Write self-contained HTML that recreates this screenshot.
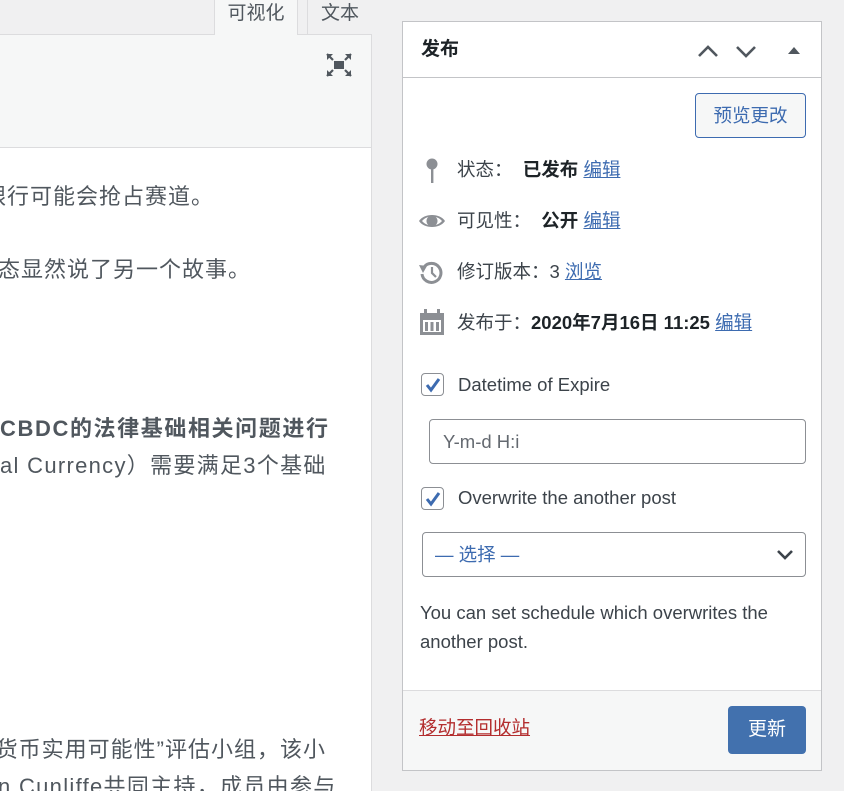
<!DOCTYPE html>
<html><head><meta charset="utf-8"><style>
*{margin:0;padding:0;box-sizing:border-box}
body{width:844px;height:791px;overflow:hidden;background:#f0f0f1;font-family:"Liberation Sans","Noto Sans CJK SC",sans-serif;color:#3c434a;position:relative}
.abs{position:absolute}
.ed{left:0;top:0;width:372px;height:791px;background:#fff;border-right:1px solid #dcdcde;overflow:hidden}
.txt{position:absolute;white-space:nowrap;font-size:22px;color:#50575e;line-height:30px;letter-spacing:1px}
a{color:#3d6bb0;text-decoration:underline}
.row{position:absolute;left:457px;font-size:18.5px;line-height:24px;white-space:nowrap;color:#3c434a}
.row b{color:#1d2327}
.cb{position:absolute;left:421px;width:23px;height:23px;border:1px solid #8c8f94;border-radius:4px;background:#fff}
</style></head><body>
<div class="abs ed">
<div class="txt" style="right:157px;top:182px">银行可能会抢占赛道。</div>
<div class="txt" style="right:120px;top:255px">状态显然说了另一个故事。</div>
<div class="txt" style="left:0;top:414px;font-weight:bold;letter-spacing:1.6px">CBDC的法律基础相关问题进行</div>
<div class="txt" style="left:0;top:451px;letter-spacing:1.3px">al Currency）需要满足3个基础</div>
<div class="txt" style="right:45px;top:735px">字货币实用可能性”评估小组，该小</div>
<div class="txt" style="left:-2px;top:772px;letter-spacing:1.3px">n Cunliffe共同主持，成员由参与</div>
</div>
<div class="abs" style="left:0;top:0;width:214px;height:35px;background:#f0f0f1;border-bottom:1px solid #dcdcde"></div>
<div class="abs" style="left:214px;top:0;width:84px;height:36px;background:#f6f7f7;border:1px solid #dcdcde;border-bottom:none;border-top:none;font-size:19px;text-align:center;line-height:28px;color:#50575e">可视化</div>
<div class="abs" style="left:298px;top:0;width:9px;height:35px;background:#f0f0f1;border-bottom:1px solid #dcdcde"></div>
<div class="abs" style="left:307px;top:0;width:65px;height:35px;background:#f0f0f1;border-left:1px solid #dcdcde;border-bottom:1px solid #dcdcde;font-size:19px;text-align:center;line-height:28px;color:#50575e">文本</div>
<div class="abs" style="left:0;top:35px;width:371px;height:113px;background:#f6f7f7;border-bottom:1px solid #dcdcde"></div>
<svg class="abs" style="left:326px;top:53px" width="26" height="24" viewBox="0 0 26 24"><rect x="8" y="8" width="10" height="8" fill="#50575e"/><path d="M1 1l6 6M25 1l-6 6M1 23l6-6M25 23l-6-6" stroke="#50575e" stroke-width="2.2"/><path d="M1 1h6L1 7zM25 1h-6l6 6zM1 23h6l-6-6zM25 23h-6l6-6z" fill="#50575e"/></svg>

<div class="abs" style="left:402px;top:21px;width:420px;height:750px;background:#fff;border:1px solid #c3c4c7"></div>
<div class="abs" style="left:403px;top:77px;width:418px;height:1px;background:#c3c4c7"></div>
<div class="abs" style="left:421px;top:37px;font-size:19px;font-weight:bold;color:#1d2327;line-height:26px">发布</div>
<svg class="abs" style="left:697px;top:41px" width="110" height="20" viewBox="0 0 110 20"><path d="M2 15l9-9 9 9" stroke="#50575e" stroke-width="2.6" fill="none"/><path d="M40 6l9 9 9-9" stroke="#50575e" stroke-width="2.6" fill="none"/><path d="M91 13l6-7 6 7z" fill="#50575e"/></svg>
<div class="abs" style="left:695px;top:93px;width:111px;height:45px;border:1px solid #3d6bb0;border-radius:4px;background:#f6f7f7;color:#3d6bb0;font-size:18.5px;text-align:center;line-height:43px">预览更改</div>

<svg class="abs" style="left:424px;top:158px" width="16" height="26" viewBox="0 0 16 26"><circle cx="8" cy="6" r="5.5" fill="#8c8f94"/><rect x="7" y="10" width="2.4" height="15" fill="#8c8f94"/></svg>
<div class="row" style="top:158px">状态：&nbsp;&nbsp;<b>已发布</b> <a>编辑</a></div>
<svg class="abs" style="left:418px;top:211px" width="28" height="20" viewBox="0 0 28 20"><path d="M1 10C6 2 22 2 27 10 22 18 6 18 1 10z" fill="#8c8f94"/><path d="M4 10C9 4 19 4 24 10 19 16 9 16 4 10z" fill="#fff"/><circle cx="14" cy="10" r="5.5" fill="#8c8f94"/></svg>
<div class="row" style="top:209px">可见性：&nbsp;&nbsp;<b>公开</b> <a>编辑</a></div>
<svg class="abs" style="left:418px;top:259px" width="26" height="26" viewBox="0 0 26 26"><path d="M6 8A9.5 9.5 0 1 1 4 15" stroke="#8c8f94" stroke-width="3" fill="none"/><path d="M1 6l8 1-4 7z" fill="#8c8f94"/><path d="M14 8v6l4 4" stroke="#8c8f94" stroke-width="2.2" fill="none"/></svg>
<div class="row" style="top:260px">修订版本：3 <a>浏览</a></div>
<svg class="abs" style="left:420px;top:309px" width="24" height="26" viewBox="0 0 24 26"><rect x="0" y="4" width="24" height="22" fill="#8c8f94"/><rect x="3" y="11" width="18" height="12" fill="#fff"/><rect x="5" y="13" width="3" height="9" fill="#8c8f94"/><rect x="10.5" y="13" width="3" height="9" fill="#8c8f94"/><rect x="16" y="13" width="3" height="9" fill="#8c8f94"/><rect x="4" y="0" width="3" height="7" fill="#8c8f94"/><rect x="17" y="0" width="3" height="7" fill="#8c8f94"/></svg>
<div class="row" style="top:311px">发布于：<b>2020年7月16日 11:25</b> <a>编辑</a></div>

<div class="cb" style="top:373px"></div>
<svg class="abs" style="left:424px;top:376px" width="18" height="18" viewBox="0 0 18 18"><path d="M3 9l4 5 8-11" stroke="#3d6bb0" stroke-width="3" fill="none"/></svg>
<div class="row" style="left:458px;top:373px">Datetime of Expire</div>
<div class="abs" style="left:429px;top:419px;width:377px;height:45px;border:1px solid #8c8f94;border-radius:4px;font-size:18.5px;line-height:43px;padding-left:13px;color:#646970">Y-m-d H:i</div>
<div class="cb" style="top:487px"></div>
<svg class="abs" style="left:424px;top:490px" width="18" height="18" viewBox="0 0 18 18"><path d="M3 9l4 5 8-11" stroke="#3d6bb0" stroke-width="3" fill="none"/></svg>
<div class="row" style="left:458px;top:486px">Overwrite the another post</div>
<div class="abs" style="left:422px;top:532px;width:384px;height:45px;border:1px solid #8c8f94;border-radius:4px;font-size:18.5px;line-height:43px;padding-left:12px;color:#3d6bb0">— 选择 —</div>
<svg class="abs" style="left:776px;top:548px" width="18" height="14" viewBox="0 0 18 14"><path d="M2 3l7 7 7-7" stroke="#3c434a" stroke-width="2.6" fill="none"/></svg>
<div class="abs" style="left:420px;top:598px;width:395px;font-size:18.5px;line-height:29px;color:#3c434a">You can set schedule which overwrites the another post.</div>

<div class="abs" style="left:403px;top:690px;width:418px;height:80px;background:#f6f7f7;border-top:1px solid #dcdcde"></div>
<div class="abs" style="left:419px;top:716px;font-size:18.5px;line-height:24px"><a style="color:#b32d2e">移动至回收站</a></div>
<div class="abs" style="left:728px;top:706px;width:78px;height:48px;background:#4271ae;border-radius:4px;color:#fff;font-size:19px;text-align:center;line-height:48px">更新</div>
</body></html>
